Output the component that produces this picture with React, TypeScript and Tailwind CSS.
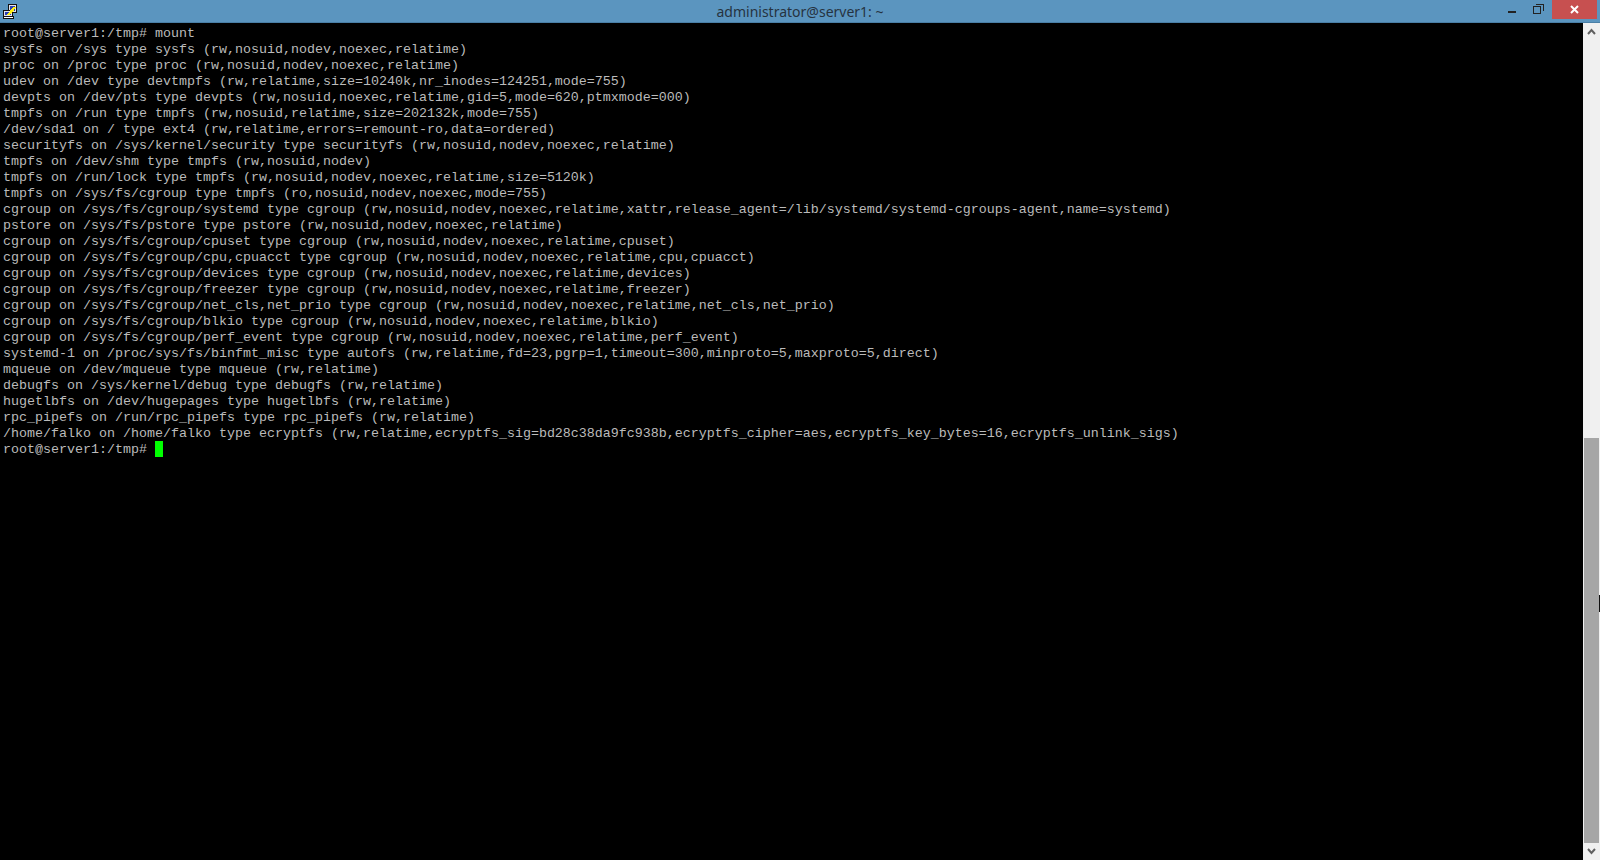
const lines = [
  "root@server1:/tmp# mount",
  "sysfs on /sys type sysfs (rw,nosuid,nodev,noexec,relatime)",
  "proc on /proc type proc (rw,nosuid,nodev,noexec,relatime)",
  "udev on /dev type devtmpfs (rw,relatime,size=10240k,nr_inodes=124251,mode=755)",
  "devpts on /dev/pts type devpts (rw,nosuid,noexec,relatime,gid=5,mode=620,ptmxmode=000)",
  "tmpfs on /run type tmpfs (rw,nosuid,relatime,size=202132k,mode=755)",
  "/dev/sda1 on / type ext4 (rw,relatime,errors=remount-ro,data=ordered)",
  "securityfs on /sys/kernel/security type securityfs (rw,nosuid,nodev,noexec,relatime)",
  "tmpfs on /dev/shm type tmpfs (rw,nosuid,nodev)",
  "tmpfs on /run/lock type tmpfs (rw,nosuid,nodev,noexec,relatime,size=5120k)",
  "tmpfs on /sys/fs/cgroup type tmpfs (ro,nosuid,nodev,noexec,mode=755)",
  "cgroup on /sys/fs/cgroup/systemd type cgroup (rw,nosuid,nodev,noexec,relatime,xattr,release_agent=/lib/systemd/systemd-cgroups-agent,name=systemd)",
  "pstore on /sys/fs/pstore type pstore (rw,nosuid,nodev,noexec,relatime)",
  "cgroup on /sys/fs/cgroup/cpuset type cgroup (rw,nosuid,nodev,noexec,relatime,cpuset)",
  "cgroup on /sys/fs/cgroup/cpu,cpuacct type cgroup (rw,nosuid,nodev,noexec,relatime,cpu,cpuacct)",
  "cgroup on /sys/fs/cgroup/devices type cgroup (rw,nosuid,nodev,noexec,relatime,devices)",
  "cgroup on /sys/fs/cgroup/freezer type cgroup (rw,nosuid,nodev,noexec,relatime,freezer)",
  "cgroup on /sys/fs/cgroup/net_cls,net_prio type cgroup (rw,nosuid,nodev,noexec,relatime,net_cls,net_prio)",
  "cgroup on /sys/fs/cgroup/blkio type cgroup (rw,nosuid,nodev,noexec,relatime,blkio)",
  "cgroup on /sys/fs/cgroup/perf_event type cgroup (rw,nosuid,nodev,noexec,relatime,perf_event)",
  "systemd-1 on /proc/sys/fs/binfmt_misc type autofs (rw,relatime,fd=23,pgrp=1,timeout=300,minproto=5,maxproto=5,direct)",
  "mqueue on /dev/mqueue type mqueue (rw,relatime)",
  "debugfs on /sys/kernel/debug type debugfs (rw,relatime)",
  "hugetlbfs on /dev/hugepages type hugetlbfs (rw,relatime)",
  "rpc_pipefs on /run/rpc_pipefs type rpc_pipefs (rw,relatime)",
  "/home/falko on /home/falko type ecryptfs (rw,relatime,ecryptfs_sig=bd28c38da9fc938b,ecryptfs_cipher=aes,ecryptfs_key_bytes=16,ecryptfs_unlink_sigs)",
];

const PuttyIcon = () => (
  <svg width="15" height="15" viewBox="0 0 15 15" shapeRendering="crispEdges">
    <rect x="5.5" y="0.5" width="8" height="8" fill="#e4e4ec" stroke="#111" />
    <rect x="7" y="2" width="5" height="5" fill="#2a3fb0" />
    <rect x="0.5" y="6.5" width="9" height="6" fill="#e4e4ec" stroke="#111" />
    <rect x="2" y="8" width="6" height="3" fill="#2a3fb0" />
    <rect x="0.5" y="12.5" width="10" height="2" fill="#ffffff" stroke="#111" />
    <path d="M4 11 L10 3 L13 3 L10 6 L11 7 L6 11 Z" fill="#ffee10" />
  </svg>
);

const App = () => {
  return (
    <div className="w-[1600px] h-[860px] flex flex-col overflow-hidden bg-black">
      <div className="h-[23px] shrink-0 flex items-start bg-[#5b95bf] border-b border-[#4a7fa6]">
        <div className="w-[15px] h-[15px] mt-[4px] ml-[3px]">
          <PuttyIcon />
        </div>
        <div className="flex-1 text-center text-[14px] leading-[23px] text-[#26333f] font-['Noto_Sans','Open_Sans',sans-serif] pl-[84px]">
          administrator@server1: ~
        </div>
        <div className="w-[28px] h-[19px] flex items-center justify-center">
          <div className="w-[8px] h-[2px] bg-[#222] mt-[4px]" />
        </div>
        <div className="w-[26px] h-[19px] flex items-start justify-start pt-[4px] pl-[7px]">
          <svg width="11" height="11" viewBox="0 0 11 11" fill="none" stroke="#222" shapeRendering="crispEdges">
            <rect x="0.5" y="2.5" width="7" height="7" strokeWidth="1.5" />
            <path d="M3 0.5 H10.5 V7" />
          </svg>
        </div>
        <div className="w-[45px] h-[19px] bg-[#c75050] flex items-center justify-center">
          <svg width="9" height="9" viewBox="0 0 9 9" stroke="#fff" strokeWidth="2">
            <path d="M1 1 L8 8 M8 1 L1 8" />
          </svg>
        </div>
        <div className="w-[3px]" />
      </div>
      <div className="flex-1 flex min-h-0">
        <div className="flex-1 bg-black pt-[2px] pl-[3px] font-['Liberation_Mono',monospace] text-[13.33px] leading-[18px] text-[#bbbbbb] whitespace-pre">
          {lines.map((line, i) => (
            <div key={i} className="h-[16px]">{line}</div>
          ))}
          <div className="h-[16px] flex">
            <span>root@server1:/tmp# </span>
            <span className="w-[8px] h-[16px] bg-[#00ff00]" />
          </div>
        </div>
        <div className="relative w-[17px] shrink-0 flex flex-col items-center bg-[#f0f0f0]">
          <div className="h-[17px] w-full shrink-0 flex items-center justify-center">
            <svg width="9" height="7" viewBox="0 0 9 7" fill="none" stroke="#606060" strokeWidth="2">
              <path d="M1 6 L4.5 2 L8 6" />
            </svg>
          </div>
          <div className="flex-1" />
          <div className="w-[15px] h-[405px] shrink-0 bg-[#a6a6a6]" />
          <div className="h-[17px] w-full shrink-0 flex items-center justify-center">
            <svg width="9" height="7" viewBox="0 0 9 7" fill="none" stroke="#606060" strokeWidth="2">
              <path d="M1 1 L4.5 5 L8 1" />
            </svg>
          </div>
          <div className="absolute right-0 top-[572px] w-[1px] h-[17px] bg-[#111]" />
        </div>
      </div>
    </div>
  );
};

export default App;
